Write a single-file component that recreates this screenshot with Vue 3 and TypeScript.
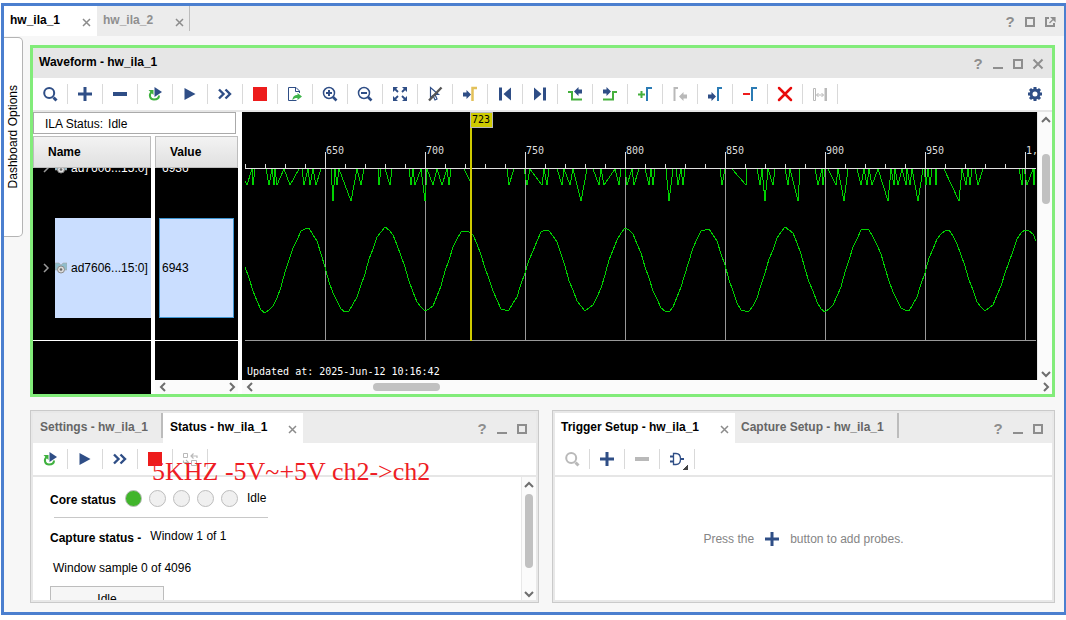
<script setup lang="ts">
import { ref } from 'vue'

interface Tool {
  icon: string
  label: string
  disabled?: boolean
  menu?: boolean
}

const waveTools: Tool[] = [
  { icon: 'search', label: 'Search' },
  { icon: 'plus', label: 'Add probes' },
  { icon: 'minus', label: 'Remove probes' },
  { icon: 'rerun', label: 'Auto re-trigger' },
  { icon: 'play', label: 'Run trigger' },
  { icon: 'fast', label: 'Run trigger immediate' },
  { icon: 'stop', label: 'Stop trigger' },
  { icon: 'export', label: 'Export data' },
  { icon: 'zoom-in', label: 'Zoom in' },
  { icon: 'zoom-out', label: 'Zoom out' },
  { icon: 'fit', label: 'Zoom fit' },
  { icon: 'pointer', label: 'Toggle pointer' },
  { icon: 'to-cursor', label: 'Go to cursor' },
  { icon: 'first', label: 'Go to start' },
  { icon: 'last', label: 'Go to end' },
  { icon: 'prev-edge', label: 'Previous transition' },
  { icon: 'next-edge', label: 'Next transition' },
  { icon: 'add-marker', label: 'Add marker' },
  { icon: 'prev-marker', label: 'Previous marker', disabled: true },
  { icon: 'next-marker', label: 'Next marker' },
  { icon: 'del-marker', label: 'Delete marker' },
  { icon: 'clear', label: 'Delete all markers' },
  { icon: 'measure', label: 'Measure', disabled: true },
]

const statusTools: Tool[] = [
  { icon: 'rerun', label: 'Auto re-trigger' },
  { icon: 'play', label: 'Run trigger' },
  { icon: 'fast', label: 'Run trigger immediate' },
  { icon: 'stop', label: 'Stop trigger' },
  { icon: 'swap', label: 'Toggle layout', disabled: true },
]

const triggerTools: Tool[] = [
  { icon: 'search-off', label: 'Search', disabled: true },
  { icon: 'plus', label: 'Add probes' },
  { icon: 'minus-off', label: 'Remove probes', disabled: true },
  { icon: 'gate', label: 'Trigger condition', menu: true },
]

const signals = ref([
  { name: 'ad7606...15:0]', value: '6936', selected: false },
  { name: 'ad7606...15:0]', value: '6943', selected: true },
])

const coreStates = [true, false, false, false, false]

const majors = ['650', '700', '750', '800', '850', '900', '950', '1,'].map((label, i) => ({
  label,
  x: 83 + i * 100,
}))
const ticks = Array.from({ length: 40 }, (_, i) => 3 + i * 20)

// Visible part of the clipped channel: pairs of x and depth below the ruler.
const bursts: number[][] = [
  [3, 12, 5, 16, 10, 0, 11, 16, 13, 0],
  [24, 0, 27, 16, 30, 0, 32, 16, 33, 0, 35, 16, 42, 0, 48, 16, 57, 0],
  [60, 0, 62, 16, 66, 0, 68, 16, 71, 0, 74, 16, 79, 0],
  [89, 0, 91, 32, 93, 0, 95, 16, 97, 0, 109, 32, 115, 0, 119, 16, 122, 0],
  [136, 0, 137, 16, 139, 0],
  [143, 0, 148, 16, 150, 0],
  [167, 0, 169, 16, 171, 0, 173, 16, 179, 0, 183, 32, 185, 0, 191, 16, 195, 0, 200, 16, 205, 0, 207, 16, 209, 0],
  [222, 0, 228, 12, 230, 0],
  [265, 0, 267, 16, 272, 0],
  [282, 0, 285, 16, 288, 0, 300, 16, 302, 0, 305, 16, 307, 0],
  [315, 0, 320, 16, 322, 0, 328, 16, 331, 0, 339, 32, 345, 0],
  [351, 0, 357, 16, 359, 0, 362, 16, 373, 0, 377, 16, 379, 0],
  [383, 0, 385, 16, 390, 0, 392, 16, 397, 0],
  [403, 0, 407, 16, 409, 0, 411, 16, 413, 0],
  [424, 0, 427, 32, 431, 0],
  [434, 0, 436, 16, 439, 0, 441, 16, 443, 0],
  [478, 0, 480, 16, 483, 0],
  [490, 0, 504, 16, 505, 0],
  [515, 0, 518, 16, 520, 0, 523, 32, 526, 0, 531, 16, 533, 0],
  [543, 0, 546, 16, 548, 0, 556, 32, 558, 0],
  [573, 0, 576, 16, 580, 0, 581, 16, 583, 0],
  [586, 0, 594, 16, 596, 0, 602, 32, 606, 0],
  [615, 0, 619, 16, 622, 0, 625, 16, 627, 0, 630, 16, 636, 0, 646, 32, 649, 0, 652, 16, 653, 0, 656, 16, 660, 0, 664, 16, 665, 0, 668, 16, 670, 0, 676, 32, 681, 0],
  [682, 0, 684, 16, 686, 0, 688, 16, 690, 0],
  [693, 0, 694, 16, 695, 0],
  [702, 0, 717, 32, 720, 0, 724, 16, 726, 0, 728, 16, 730, 0],
  [733, 0, 736, 16, 741, 0],
  [777, 0, 780, 16, 781, 0],
  [782, 0, 785, 16, 791, 0, 792, 16, 793, 0],
]

const burstPath = bursts
  .map((b) => {
    let d = ''
    for (let i = 0; i < b.length; i += 2) d += `${i ? 'L' : 'M'}${b[i]} ${57 + b[i + 1]}`
    return d
  })
  .join('')

// Sampled sine channel, four pixels between readings, with a little ADC noise.
const noise = [0, 1, -1, 2, 0, -2, 1, 0, 2, -1, 0, 1, -2, 0, 1, 0, -1]
const sinePoints = Array.from({ length: 199 }, (_, i) => {
  const x = Math.min(3 + i * 4, 794)
  const y = 158 - 41 * Math.cos(((x - 64) / 80) * 2 * Math.PI) + noise[(i * 5) % noise.length]
  return `${x},${Math.round(y)}`
}).join(' ')
</script>

<template>
  <svg class="sprite" aria-hidden="true">
    <symbol id="i-search" viewBox="0 0 16 16"><circle cx="7.2" cy="7" r="5" fill="none" stroke="#2f4e86" stroke-width="2" /><path d="M11.5 11.5l3 3" stroke="#2f4e86" stroke-width="3" /></symbol>
    <symbol id="i-search-off" viewBox="0 0 16 16"><circle cx="7.2" cy="7" r="5" fill="none" stroke="#b9b9b9" stroke-width="2" /><path d="M11.5 11.5l3 3" stroke="#b9b9b9" stroke-width="3" /></symbol>
    <symbol id="i-plus" viewBox="0 0 16 16"><path d="M8 1v14M1 8h14" stroke="#2f4e86" stroke-width="3" /></symbol>
    <symbol id="i-minus" viewBox="0 0 16 16"><path d="M1 8h14" stroke="#2f4e86" stroke-width="4" /></symbol>
    <symbol id="i-minus-off" viewBox="0 0 16 16"><path d="M1 8h14" stroke="#b9b9b9" stroke-width="4" /></symbol>
    <symbol id="i-rerun" viewBox="0 0 16 16"><path d="M4.500 6C1.500 9 3 13.500 7 13.500c3 0 5-1.500 5-4" fill="none" stroke="#3fb13f" stroke-width="2" /><path d="M1.500 4h5v5z" fill="#3fb13f" /><path d="M7.500 1l7.500 5-7.500 5z" fill="#2f4e86" /></symbol>
    <symbol id="i-play" viewBox="0 0 16 16"><path d="M2.500 2l11 6-11 6z" fill="#2f4e86" /></symbol>
    <symbol id="i-fast" viewBox="0 0 16 16"><path d="M2 3.500L6.500 8 2 12.500M8.500 3.500L13 8l-4.500 4.500" fill="none" stroke="#2f4e86" stroke-width="2.400" /></symbol>
    <symbol id="i-stop" viewBox="0 0 16 16"><path d="M1 1h14v14H1z" fill="#ed1c1c" /></symbol>
    <symbol id="i-export" viewBox="0 0 16 16"><path d="M12.500 7V5L9 1.500H1.500v13h8M8.500 1.500v4h4" fill="none" stroke="#2f4e86" /><path d="M5.500 14.500c0-4 2-5.500 5-5.500V7l4.500 3.500-4.500 3.500v-2c-2.500 0-4 .5-5 2.500z" fill="#3fb54a" /></symbol>
    <symbol id="i-zoom-in" viewBox="0 0 16 16"><circle cx="7" cy="7" r="5.500" fill="none" stroke="#2f4e86" stroke-width="1.500" /><path d="M4 7h6M7 4v6" stroke="#2f4e86" stroke-width="2" /><path d="M11 11l3.500 3.500" stroke="#2f4e86" stroke-width="2.600" /></symbol>
    <symbol id="i-zoom-out" viewBox="0 0 16 16"><circle cx="7" cy="7" r="5.500" fill="none" stroke="#2f4e86" stroke-width="1.500" /><path d="M4 7h6" stroke="#2f4e86" stroke-width="2" /><path d="M11 11l3.500 3.500" stroke="#2f4e86" stroke-width="2.600" /></symbol>
    <symbol id="i-fit" viewBox="0 0 16 16"><path d="M1 1h5L1 6zM15 1v5l-5-5zM1 15v-5l5 5zM15 15h-5l5-5z" fill="#2f4e86" /><path d="M3 3l3 3M13 3l-3 3M3 13l3-3M13 13l-3-3" stroke="#2f4e86" stroke-width="1.800" /></symbol>
    <symbol id="i-pointer" viewBox="0 0 16 16"><path d="M3.500 1.500v10l2.500-2 2 4.500 2-1-2-4.500h3.500z" fill="none" stroke="#2f4e86" stroke-width="1.200" /><path d="M14.500 1.500l-12.500 13" stroke="#555" stroke-width="2.400" /></symbol>
    <symbol id="i-to-cursor" viewBox="0 0 16 16"><path d="M1 6.500h3.500V4L9 8.500 4.500 13v-2.500H1z" fill="#2f4e86" /><path d="M10.500 15V2H15" fill="none" stroke="#e3c15a" stroke-width="2.500" /></symbol>
    <symbol id="i-first" viewBox="0 0 16 16"><path d="M2 1.500h3v13H2zM14 1.500v13L6.500 8z" fill="#2f4e86" /></symbol>
    <symbol id="i-last" viewBox="0 0 16 16"><path d="M11 1.500h3v13h-3zM2 1.500v13L9.500 8z" fill="#2f4e86" /></symbol>
    <symbol id="i-prev-edge" viewBox="0 0 16 16"><path d="M1 6h4v7.500h10" fill="none" stroke="#45b03c" stroke-width="2" /><path d="M15 7.500h-3.500V10L7 5.500 11.500 1v2.500H15z" fill="#2f4e86" /></symbol>
    <symbol id="i-next-edge" viewBox="0 0 16 16"><path d="M1 13.500h10V6h4" fill="none" stroke="#45b03c" stroke-width="2" /><path d="M1 3.500h3.500V1L9 5.500 4.500 10V7.500H1z" fill="#2f4e86" /></symbol>
    <symbol id="i-add-marker" viewBox="0 0 16 16"><path d="M4.500 5v7M1 8.500h7" stroke="#45b03c" stroke-width="2" /><path d="M10 15V2h5" fill="none" stroke="#2b7bb4" stroke-width="2" /></symbol>
    <symbol id="i-prev-marker" viewBox="0 0 16 16"><path d="M2.500 15V2H6" fill="none" stroke="#b9b9b9" stroke-width="2" /><path d="M15 12.500h-3.500V15L7 10.500 11.500 6v2.500H15z" fill="#b9b9b9" /></symbol>
    <symbol id="i-next-marker" viewBox="0 0 16 16"><path d="M1 8.500h3.500V6L9 10.500 4.500 15v-2.500H1z" fill="#2f4e86" /><path d="M11 15V2h4" fill="none" stroke="#2b7bb4" stroke-width="2" /></symbol>
    <symbol id="i-del-marker" viewBox="0 0 16 16"><path d="M1 8h7" stroke="#ed1c1c" stroke-width="2" /><path d="M10 15V2h5" fill="none" stroke="#2b7bb4" stroke-width="2" /></symbol>
    <symbol id="i-clear" viewBox="0 0 16 16"><path d="M2 2l12 12M14 2L2 14" stroke="#e80c0c" stroke-width="2.500" stroke-linecap="round" /></symbol>
    <symbol id="i-measure" viewBox="0 0 16 16"><path d="M1.500 2.500h2v12h-2z" fill="none" stroke="#b9b9b9" /><path d="M12.500 2h2.500v13h-2.500z" fill="#b9b9b9" /><path d="M4.500 9h7M6.500 7L4.500 9l2 2M9.500 7l2 2-2 2" fill="none" stroke="#b9b9b9" /></symbol>
    <symbol id="i-gear" viewBox="0 0 16 16"><path d="M8 1v14M1 8h14M3 3l10 10M13 3L3 13" stroke="#2f4e86" stroke-width="3" /><circle cx="8" cy="8" r="4" fill="#fff" stroke="#2f4e86" stroke-width="3" /></symbol>
    <symbol id="i-swap" viewBox="0 0 16 16"><path d="M1.500 2.500h4v4h-4zM9.500 9.500h5v5h-5z" fill="none" stroke="#b9b9b9" /><path d="M15 7V5H9.500M11.500 2.500L9 5l2.500 2.500M1.500 9.500v2H6M4 9l2.500 2.500L4 14" fill="none" stroke="#b9b9b9" stroke-width="1.200" /></symbol>
    <symbol id="i-gate" viewBox="0 0 16 16"><path d="M4.500 2.500h2.500c3 0 4.500 2.500 4.500 5.500s-1.500 5.500-4.500 5.500H4.500z" fill="none" stroke="#2f4e86" stroke-width="1.300" /><path d="M1 5.500h3M1 10.500h3M11.500 8H15" stroke="#2f4e86" stroke-width="1.800" /></symbol>
    <symbol id="i-close" viewBox="0 0 9 9"><path d="M1 1l7 7M8 1L1 8" stroke="#8c8c8c" stroke-width="1.500" /></symbol>
    <symbol id="i-w-min" viewBox="0 0 12 12"><path d="M1 10h10" stroke="#8e8e8e" stroke-width="2" /></symbol>
    <symbol id="i-w-max" viewBox="0 0 12 12"><path d="M2 2h8v8H2z" fill="none" stroke="#8e8e8e" stroke-width="2" /></symbol>
    <symbol id="i-w-pop" viewBox="0 0 12 12"><path d="M5 2H2v8h8V7" fill="none" stroke="#8e8e8e" stroke-width="2" /><path d="M7.500 1.500H11V5zM5.500 7L9.500 3" fill="#8e8e8e" stroke="#8e8e8e" stroke-width="1.200" /></symbol>
    <symbol id="i-w-close" viewBox="0 0 12 12"><path d="M1.500 1.500l9 9M10.500 1.500l-9 9" stroke="#8e8e8e" stroke-width="2" /></symbol>
    <symbol id="i-up" viewBox="0 0 10 10"><path d="M1 7l4-4 4 4" fill="none" stroke="#6e6e6e" stroke-width="2" /></symbol>
    <symbol id="i-down" viewBox="0 0 10 10"><path d="M1 3l4 4 4-4" fill="none" stroke="#6e6e6e" stroke-width="2" /></symbol>
    <symbol id="i-left" viewBox="0 0 10 10"><path d="M7 1L3 5l4 4" fill="none" stroke="#6e6e6e" stroke-width="2" /></symbol>
    <symbol id="i-right" viewBox="0 0 10 10"><path d="M3 1l4 4-4 4" fill="none" stroke="#6e6e6e" stroke-width="2" /></symbol>
    <symbol id="i-expand" viewBox="0 0 10 10"><path d="M3 1l4 4-4 4" fill="none" stroke="#9a9a9a" stroke-width="1.500" /></symbol>
    <symbol id="i-bus" viewBox="0 0 12 12"><path d="M0 1h4l2 2 2-2h4v7H0z" fill="#8fbccc" stroke="#a9a9a9" stroke-width=".6" /><circle cx="6" cy="7.500" r="3.500" fill="#dcdcdc" stroke="#8a8a8a" /><circle cx="6" cy="7.500" r="1.300" fill="#666" /></symbol>
  </svg>

  <main class="page">
    <div class="frame">
      <header class="tabs">
        <div class="tab active"><button class="tab-name">hw_ila_1</button><button class="x" aria-label="Close hw_ila_1"><svg><use href="#i-close" /></svg></button></div>
        <div class="tab divided"><button class="tab-name faint">hw_ila_2</button><button class="x" aria-label="Close hw_ila_2"><svg><use href="#i-close" /></svg></button></div>
        <div class="window-tools">
          <button aria-label="Help">?</button>
          <button aria-label="Maximize"><svg><use href="#i-w-max" /></svg></button>
          <button aria-label="Float"><svg><use href="#i-w-pop" /></svg></button>
        </div>
      </header>

      <div class="body">
        <button class="side-tab"><span>Dashboard Options</span></button>

        <div class="workspace">
          <section class="wave-panel">
            <header class="title-bar">
              <h1>Waveform - hw_ila_1</h1>
              <div class="window-tools">
                <button aria-label="Help">?</button>
                <button aria-label="Minimize"><svg><use href="#i-w-min" /></svg></button>
                <button aria-label="Maximize"><svg><use href="#i-w-max" /></svg></button>
                <button aria-label="Close"><svg><use href="#i-w-close" /></svg></button>
              </div>
            </header>
            <div class="toolbar">
              <button v-for="t in waveTools" :key="t.label" class="tool" :aria-label="t.label" :disabled="t.disabled">
                <svg><use :href="'#i-' + t.icon" /></svg>
              </button>
              <button class="tool settings" aria-label="Settings"><svg><use href="#i-gear" /></svg></button>
            </div>

            <div class="wave-body">
              <div class="signals">
                <div class="ila-status"><span>ILA Status:</span><span>Idle</span></div>
                <div class="columns">
                  <div class="column names">
                    <h2>Name</h2>
                    <div class="cells">
                      <div v-for="(s, i) in signals" :key="i" class="row" :class="{ selected: s.selected }">
                        <button class="expander" aria-label="Expand"><svg><use href="#i-expand" /></svg></button>
                        <div class="label"><svg><use href="#i-bus" /></svg>{{ s.name }}</div>
                      </div>
                      <div class="rule"></div>
                    </div>
                  </div>
                  <div class="column values">
                    <h2>Value</h2>
                    <div class="cells">
                      <div v-for="(s, i) in signals" :key="i" class="row" :class="{ selected: s.selected }">
                        <div class="value">{{ s.value }}</div>
                      </div>
                      <div class="rule"></div>
                    </div>
                    <div class="hscroll">
                      <button aria-label="Scroll left"><svg><use href="#i-left" /></svg></button>
                      <button aria-label="Scroll right"><svg><use href="#i-right" /></svg></button>
                    </div>
                  </div>
                </div>
              </div>

              <div class="plot">
                <div class="plot-row">
                  <div class="canvas">
                    <svg viewBox="0 0 795 268" preserveAspectRatio="xMinYMin slice" role="img" aria-label="Waveform">
                      <g class="crisp">
                        <path v-for="m in majors" :key="m.x" :d="`M${m.x}.5 57V228`" stroke="#999" />
                        <path d="M3 228.500H794" stroke="#999" />
                        <path :d="burstPath" class="trace" />
                        <polyline :points="sinePoints" class="trace" />
                        <path v-for="t in ticks" :key="t" :d="`M${t}.5 52v5`" stroke="#ddd" />
                        <path v-for="m in majors" :key="m.label" :d="`M${m.x}.5 40V57`" stroke="#ddd" />
                        <path d="M3 56.500H794" stroke="#e0e0e0" />
                        <path d="M229 0V229" stroke="#cfcb00" stroke-width="2" />
                        <path d="M228.500 .5h22v15h-22z" fill="#cfcb00" stroke="#b8b8b8" />
                      </g>
                      <text v-for="m in majors" :key="m.label" :x="m.x + 1" y="42" fill="#ddd">{{ m.label }}</text>
                      <text x="230" y="11" fill="#000">723</text>
                      <text x="5" y="263" fill="#fff">Updated at: 2025-Jun-12 10:16:42</text>
                    </svg>
                  </div>
                  <div class="vscroll">
                    <button aria-label="Scroll up"><svg><use href="#i-up" /></svg></button>
                    <div class="track"><div class="thumb wave-v"></div></div>
                    <button aria-label="Scroll down"><svg><use href="#i-down" /></svg></button>
                  </div>
                </div>
                <div class="hscroll">
                  <button aria-label="Scroll left"><svg><use href="#i-left" /></svg></button>
                  <div class="track"><div class="thumb wave-h"></div></div>
                  <button aria-label="Scroll right"><svg><use href="#i-right" /></svg></button>
                </div>
              </div>
            </div>
          </section>

          <div class="bottom">
            <section class="panel status">
              <header class="tabs">
                <div class="tab settings-tab divided"><button class="tab-name muted">Settings - hw_ila_1</button></div>
                <div class="tab active"><button class="tab-name">Status - hw_ila_1</button><button class="x" aria-label="Close Status"><svg><use href="#i-close" /></svg></button></div>
                <div class="window-tools">
                  <button aria-label="Help">?</button>
                  <button aria-label="Minimize"><svg><use href="#i-w-min" /></svg></button>
                  <button aria-label="Maximize"><svg><use href="#i-w-max" /></svg></button>
                </div>
              </header>
              <div class="toolbar">
                <button v-for="t in statusTools" :key="t.label" class="tool" :aria-label="t.label" :disabled="t.disabled">
                  <svg><use :href="'#i-' + t.icon" /></svg>
                </button>
              </div>
              <div class="status-body">
                <div class="status-content">
                  <div class="line core">
                    <strong>Core status</strong>
                    <div class="lamps"><i v-for="(on, i) in coreStates" :key="i" :class="{ on }"></i></div>
                    <span>Idle</span>
                  </div>
                  <hr />
                  <div class="line capture"><strong>Capture status -</strong><span>Window 1 of 1</span></div>
                  <div class="line sample">Window sample 0 of 4096</div>
                  <div class="progress">Idle</div>
                </div>
                <div class="vscroll">
                  <button aria-label="Scroll up"><svg><use href="#i-up" /></svg></button>
                  <div class="track"><div class="thumb status-v"></div></div>
                  <button aria-label="Scroll down"><svg><use href="#i-down" /></svg></button>
                </div>
              </div>
              <p class="note">5KHZ -5V~+5V ch2-&gt;ch2</p>
            </section>

            <section class="panel trigger">
              <header class="tabs">
                <div class="tab active"><button class="tab-name">Trigger Setup - hw_ila_1</button><button class="x" aria-label="Close Trigger Setup"><svg><use href="#i-close" /></svg></button></div>
                <div class="tab capture-tab divided"><button class="tab-name muted">Capture Setup - hw_ila_1</button></div>
                <div class="window-tools">
                  <button aria-label="Help">?</button>
                  <button aria-label="Minimize"><svg><use href="#i-w-min" /></svg></button>
                  <button aria-label="Maximize"><svg><use href="#i-w-max" /></svg></button>
                </div>
              </header>
              <div class="toolbar">
                <button v-for="t in triggerTools" :key="t.label" class="tool" :class="{ menu: t.menu }" :aria-label="t.label" :disabled="t.disabled">
                  <svg><use :href="'#i-' + t.icon" /></svg>
                </button>
              </div>
              <div class="hint">
                <span>Press the</span>
                <button aria-label="Add probes"><svg><use href="#i-plus" /></svg></button>
                <span>button to add probes.</span>
              </div>
            </section>
          </div>
        </div>
      </div>
    </div>
  </main>
</template>

<style>
body {
  margin: 0;
  background: #fff;
}
</style>

<style scoped>
.sprite {
  position: absolute;
  width: 0;
  height: 0;
}
.page {
  box-sizing: border-box;
  min-height: 100vh;
  padding: 3px 0 5px 1px;
  display: flex;
  font: 12px/16px "Liberation Sans", Arial, sans-serif;
  color: #000;
}
.page *,
.page *::before,
.page *::after {
  box-sizing: border-box;
}
.page svg {
  display: block;
}
button {
  margin: 0;
  padding: 0;
  border: 0;
  background: none;
  font: inherit;
  color: inherit;
  display: flex;
  align-items: center;
  justify-content: center;
}
h1,
h2,
p {
  margin: 0;
  font-size: 12px;
}
.frame {
  flex: 1;
  min-width: 0;
  display: flex;
  flex-direction: column;
  border: 3px solid #4b7fcf;
  border-right-width: 2px;
  background: #f7f7f7;
}

/* tab strips */
.tabs {
  display: flex;
  height: 30px;
  flex: none;
  background: #ececec;
}
.tab {
  position: relative;
  display: flex;
  align-items: center;
  gap: 22px;
  padding: 0 6px;
}
.tab.active {
  background: #fff;
}
.tab.divided::after {
  content: "";
  position: absolute;
  top: 0;
  right: 0;
  width: 1px;
  height: 25px;
  background: #bcbcbc;
}
.panel .tab {
  gap: 21px;
}
.panel .tab.divided::after {
  width: 2px;
}
.tab-name {
  font-weight: bold;
  padding-bottom: 2px;
  white-space: nowrap;
}
.faint {
  color: #8f8f8f;
}
.muted {
  color: #666;
}
.x {
  margin-top: 2px;
}
.x svg {
  width: 9px;
  height: 9px;
}
.settings-tab {
  padding: 0 15px 0 7px;
}
.status .tab.active {
  padding-left: 7px;
}
.capture-tab {
  padding-right: 15px;
}
.window-tools {
  display: flex;
  align-items: center;
  margin-left: auto;
  padding: 2px 4px 0 0;
}
.window-tools button {
  width: 20px;
  height: 20px;
  font-size: 15px;
  font-weight: bold;
  color: #8e8e8e;
}
.window-tools svg {
  width: 12px;
  height: 12px;
}

/* body */
.body {
  flex: 1;
  display: flex;
  gap: 7px;
  padding: 0 9px 9px 0;
  min-height: 0;
}
.side-tab {
  width: 19px;
  height: 200px;
  margin-top: 1px;
  border: 1px solid #b4b4b4;
  border-left: 0;
  border-radius: 0 5px 5px 0;
  background: #fff;
}
.side-tab span {
  writing-mode: vertical-rl;
  transform: rotate(180deg);
}
.workspace {
  flex: 1;
  min-width: 0;
  display: flex;
  flex-direction: column;
  gap: 13px;
  padding-top: 9px;
}
.wave-panel {
  border: 3px solid #82ec7a;
  background: #fff;
}
.title-bar {
  display: flex;
  align-items: center;
  height: 30px;
  padding-left: 6px;
  background: #e6e6e6;
}
.title-bar h1 {
  padding-bottom: 2px;
}
.toolbar {
  display: flex;
  align-items: center;
  height: 34px;
  flex: none;
  background: #fff;
  border-bottom: 2px solid #e6e6e6;
}
.tool {
  position: relative;
  width: 35px;
  height: 20px;
  border-right: 1px solid #d9d9d9;
}
.tool svg {
  width: 16px;
  height: 16px;
}
.tool.settings {
  margin-left: auto;
  border-right: 0;
}
.tool.menu::after {
  content: "";
  position: absolute;
  right: 6px;
  bottom: -1px;
  width: 5px;
  height: 5px;
  background: linear-gradient(135deg, transparent 50%, #444 50%);
}

/* signal list */
.wave-body {
  display: flex;
  height: 282px;
}
.signals {
  width: 209px;
  display: flex;
  flex-direction: column;
  gap: 2px;
}
.ila-status {
  height: 22px;
  width: 203px;
  padding: 3px 11px;
  border: 1px solid #aaa;
  display: flex;
  gap: 5px;
}
.columns {
  flex: 1;
  min-height: 0;
  display: flex;
  gap: 4px;
}
.column {
  display: flex;
  flex-direction: column;
}
.names {
  width: 118px;
}
.values {
  width: 83px;
}
.column h2 {
  height: 32px;
  padding: 7px 14px;
  border: 1px solid #bdbdbd;
  background: linear-gradient(#f3f3f3, #e0e0e0);
}
.cells {
  flex: 1;
  min-height: 0;
  overflow: hidden;
  background: #000;
  color: #fff;
}
.row {
  height: 100px;
  display: flex;
  align-items: center;
}
.row:first-child {
  margin-top: -50px;
}
.rule {
  margin-top: 22px;
  height: 1px;
  background: #fff;
}
.expander {
  width: 22px;
  padding-left: 4px;
}
.expander svg {
  width: 10px;
  height: 10px;
}
.label {
  flex: 1;
  height: 100%;
  display: flex;
  align-items: center;
  gap: 4px;
  white-space: nowrap;
}
.label svg {
  width: 12px;
  height: 12px;
}
.selected .label {
  background: #cadeff;
  color: #000;
}
.value {
  flex: 1;
  height: 100%;
  margin: 0 4px;
  padding-left: 2px;
  display: flex;
  align-items: center;
  border: 1px solid transparent;
}
.selected .value {
  background: #cadeff;
  border-color: #3f96d2;
  color: #000;
}

/* plot */
.plot {
  flex: 1;
  min-width: 0;
  display: flex;
  flex-direction: column;
}
.plot-row {
  flex: 1;
  display: flex;
  min-height: 0;
}
.canvas {
  flex: 1;
  min-width: 0;
  overflow: hidden;
  background: #000;
}
.canvas svg {
  width: 100%;
  height: 100%;
  font: 10px "DejaVu Sans Mono", monospace;
}
.crisp {
  shape-rendering: crispEdges;
}
.trace {
  fill: none;
  stroke: #00d200;
  stroke-width: 1;
}
.vscroll,
.hscroll {
  display: flex;
  align-items: center;
  background: #fbfbfb;
}
.vscroll {
  flex-direction: column;
  width: 15px;
  padding: 2px 0 0 1px;
  border-left: 1px solid #e8e8e8;
}
.hscroll {
  height: 14px;
  padding-left: 2px;
  justify-content: space-between;
}
.vscroll button,
.hscroll button {
  width: 12px;
  height: 12px;
  flex: none;
}
.vscroll svg,
.hscroll svg {
  width: 10px;
  height: 10px;
}
.track {
  flex: 1;
}
.thumb {
  background: #c1c1c1;
  border-radius: 4px;
}
.wave-v {
  width: 8px;
  height: 50px;
  margin-top: 28px;
}
.wave-h {
  width: 67px;
  height: 8px;
  margin-left: 117px;
}
.status-v {
  width: 8px;
  height: 74px;
  margin-top: 3px;
}

/* lower panels */
.bottom {
  flex: 1;
  display: flex;
  gap: 13px;
}
.panel {
  position: relative;
  display: flex;
  flex-direction: column;
  min-width: 0;
  padding: 2px;
  border: 1px solid #cacaca;
  background: #e8e8e8;
}
.status {
  flex: 509 1 0;
}
.trigger {
  flex: 503 1 0;
}
.status-body {
  flex: 1;
  display: flex;
  background: #fff;
}
.status-content {
  flex: 1;
  height: 123px;
  overflow: hidden;
  padding: 9px 0 0 17px;
}
.line {
  display: flex;
  align-items: center;
  height: 24px;
}
.line strong {
  padding-top: 3px;
}
.core {
  gap: 9px;
}
.lamps {
  display: flex;
  gap: 7px;
}
.lamps i {
  width: 17px;
  height: 17px;
  border: 1px solid #bdbdbd;
  border-radius: 50%;
  background: #f0f0f0;
}
.lamps .on {
  background: #41b52b;
}
hr {
  width: 214px;
  height: 1px;
  margin: 7px 0 6px 4px;
  border: 0;
  background: #c8c8c8;
}
.capture {
  gap: 9px;
}
.sample {
  margin: 8px 0 6px;
  padding-left: 3px;
}
.progress {
  width: 114px;
  height: 26px;
  padding-top: 4px;
  border: 1px solid #bdbdbd;
  background: #f6f6f6;
  text-align: center;
}
.note {
  position: absolute;
  left: 121px;
  top: 46px;
  font: 26px/30px "Liberation Serif", "Times New Roman", serif;
  color: #ee1c24;
  white-space: nowrap;
}
.hint {
  flex: 1;
  display: flex;
  align-items: center;
  justify-content: center;
  gap: 10px;
  background: #fff;
  color: #858585;
}
.hint svg {
  width: 16px;
  height: 16px;
}
</style>
